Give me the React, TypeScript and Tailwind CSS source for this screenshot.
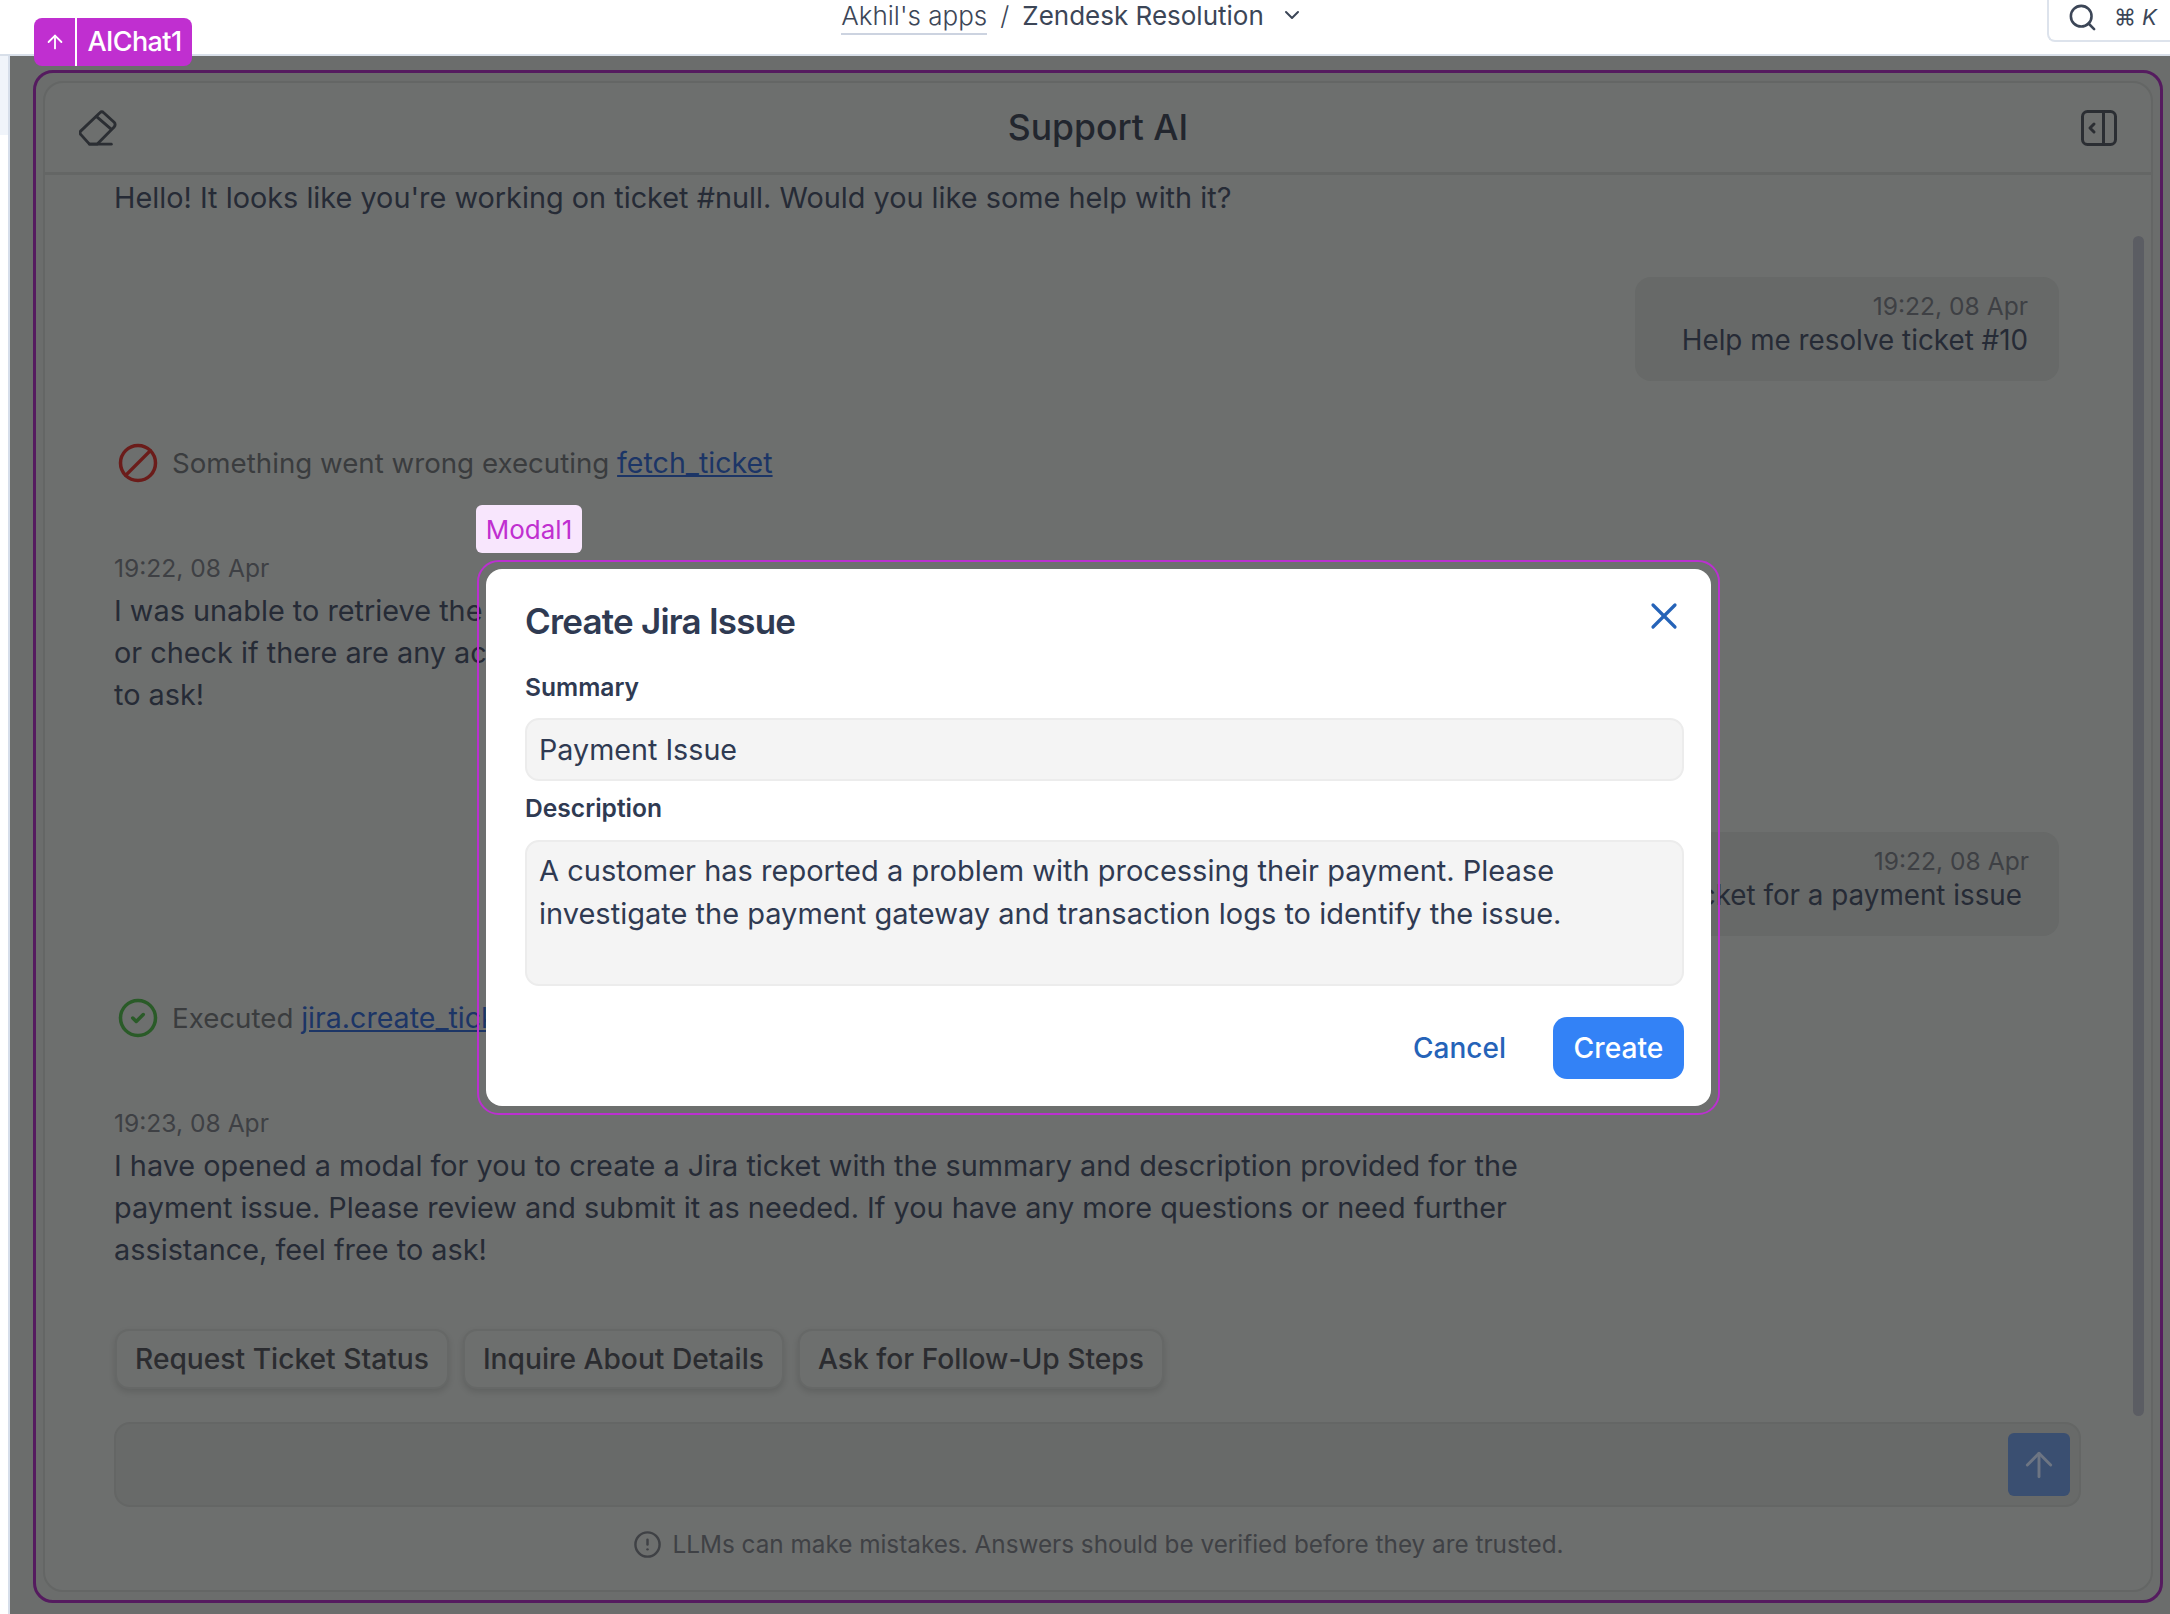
import React from 'react';
import { ArrowUp, ChevronDown, Search, X, Ban, CircleCheck, CircleAlert } from 'lucide-react';

const EraserIcon = () => (
  <svg width="38" height="40" viewBox="0 0 40 40" fill="none" stroke="#2b2e33" strokeWidth="3" strokeLinejoin="round" strokeLinecap="round">
    <path d="M22 4 Q24 2 26 4 L37 14 Q39 16 37 19 L19 37 H11 L2 27 Q0 25 2 23 Z" />
    <path d="M18.5 8 L33.5 21" />
    <path d="M11 37 H34" />
  </svg>
);

const PanelIcon = () => (
  <svg width="36" height="38" viewBox="0 0 36 38" fill="none" stroke="#2b2e33" strokeWidth="3" strokeLinejoin="round" strokeLinecap="round">
    <rect x="1.5" y="2.5" width="33" height="33" rx="5" />
    <path d="M22.5 3 V35" />
    <path d="M13 15 L9 19 L13 23" />
  </svg>
);

const App: React.FC = () => {
  return (
    <div className="flex h-[1614px] w-[2170px] flex-col overflow-hidden bg-white font-['Inter',sans-serif]">
      {/* top bar */}
      <div className="relative flex h-[56px] shrink-0 items-start justify-center border-b-2 border-[#d8dfe9] pr-[25px] text-[26px] leading-[32px] text-[#3c4657]">
        <span className="border-b-2 border-[#ccd3e0] pb-px font-light">Akhil's apps</span>
        <span className="mx-[13px] font-light">/</span>
        <span>Zendesk Resolution</span>
        <ChevronDown size={24} strokeWidth={2} className="ml-[16px] mt-[3px]" />
        <div className="absolute right-[-10px] top-[-6px] flex h-[48px] w-[133px] items-center rounded-bl-[8px] border-b-2 border-l-2 border-[#dde3ec] pl-[18px] text-[#3c4657]">
          <Search size={31} strokeWidth={2} />
          <span className="ml-[16px] text-[22px]">⌘</span>
          <span className="ml-[6px] text-[22px] italic">K</span>
        </div>
      </div>

      <div className="relative flex min-h-0 flex-1">
        {/* sidebar edge */}
        <div className="w-[10px] shrink-0 border-r-2 border-[#d6deea] bg-white">
          <div className="h-[79px] bg-[#f0f4fa]" />
        </div>

        <div className="flex-1 bg-[#6b6d6c] pb-[11px] pl-[23px] pr-[7px] pt-[14px]">
          {/* selected widget outline */}
          <div className="h-full rounded-[20px] border-[3px] border-[#551b5f] px-[7px] py-[8px]">
            <div className="relative flex h-full flex-col rounded-[20px] border-2 border-[#646665] bg-[#6d6f6e]">
              <div className="flex h-[92px] shrink-0 items-center justify-between border-b-[3px] border-[#646665] pl-[34px] pr-[34px]">
                <EraserIcon />
                <span className="mr-[2px] text-[35.5px] font-medium text-[#22262e]">Support AI</span>
                <PanelIcon />
              </div>

              <div className="absolute right-[7px] top-[153px] h-[1180px] w-[11px] rounded-full bg-[#5b5d63]" />

              <div className="flex min-h-0 flex-1 flex-col pl-[69px] pr-[70px] pt-[2px] text-[28.85px] leading-[42px] text-[#262b36]">
                <p>Hello! It looks like you're working on ticket #null. Would you like some help with it?</p>

                <div className="mr-[22px] mt-[58px] flex h-[104px] w-[424px] flex-col self-end rounded-[16px] bg-[#676968] pr-[31px] pt-[16px] text-right">
                  <span className="text-[24.6px] leading-[26px] text-[#3e4044]">19:22, 08 Apr</span>
                  <span className="whitespace-nowrap text-[27.8px]">Help me resolve ticket #10</span>
                </div>

                <div className="mt-[61px] flex items-center pl-[3px] text-[27.7px] text-[#3a3c3e]">
                  <Ban size={42} strokeWidth={2} className="mr-[13px] -scale-x-100 text-[#6b1c1a]" />
                  <span>Something went wrong executing <span className="text-[28.6px] text-[#1c3566] underline">fetch_ticket</span></span>
                </div>

                <div className="mt-[66px] text-[24.6px] leading-[36px] text-[#3e4044]">19:22, 08 Apr</div>
                <p className="mt-[4px] whitespace-nowrap">
                  I was unable to retrieve the details for ticket #10. Please verify the ticket number
                  <br />
                  or check if there are any access issues. If you need anything else, feel free
                  <br />
                  to ask!
                </p>

                <div className="mr-[22px] mt-[116px] flex h-[104px] w-[701px] flex-col self-end rounded-[16px] bg-[#676968] pr-[30px] pt-[16px] text-right">
                  <span className="text-[24.6px] leading-[26px] text-[#3e4044]">19:22, 08 Apr</span>
                  <span className="pr-[7px] text-[27.8px]">Create a Jira ticket for a payment issue</span>
                </div>

                <div className="mt-[61px] flex items-center pl-[3px] text-[27.7px] text-[#3a3c3e]">
                  <CircleCheck size={42} strokeWidth={2} className="mr-[13px] text-[#2a5b28]" />
                  <span>Executed <span className="text-[28.6px] text-[#1c3566] underline">jira.create_ticket</span></span>
                </div>

                <div className="mt-[66px] text-[24.6px] leading-[36px] text-[#3e4044]">19:23, 08 Apr</div>
                <p className="mt-[4px] whitespace-nowrap">
                  I have opened a modal for you to create a Jira ticket with the summary and description provided for the
                  <br />
                  payment issue. Please review and submit it as needed. If you have any more questions or need further
                  <br />
                  assistance, feel free to ask!
                </p>

                <div className="mt-[58px] flex gap-[14px] pl-px">
                  {['Request Ticket Status', 'Inquire About Details', 'Ask for Follow-Up Steps'].map((chip) => (
                    <span
                      key={chip}
                      className="flex h-[60px] items-center rounded-[14px] border-2 border-[#666867] bg-[#6d6f6e] px-[18px] text-[28.2px] font-medium text-[#2b2c30] shadow-[0_3px_6px_rgba(0,0,0,0.12)]"
                    >
                      {chip}
                    </span>
                  ))}
                </div>

                <div className="mt-[33px] flex h-[85px] shrink-0 items-center justify-end rounded-[16px] border-2 border-[#646665] bg-[#686a69] pr-[9px]">
                  <div className="flex h-[63px] w-[62px] items-center justify-center rounded-[6px] bg-[#3a4f71]">
                    <ArrowUp size={40} strokeWidth={1.75} className="text-[#6d7583]" />
                  </div>
                </div>

                <div className="mt-[19px] flex items-center justify-center pl-[2px] text-[24.3px] leading-[36px] text-[#3f4145]">
                  <CircleAlert size={29} strokeWidth={2} className="mr-[10px]" />
                  <span>LLMs can make mistakes. Answers should be verified before they are trusted.</span>
                </div>
              </div>
            </div>
          </div>
        </div>

        {/* modal */}
        <div className="absolute left-[477px] top-[504px] h-[555px] w-[1243px] rounded-[22px] border-2 border-[#bb30d0] p-[7px]">
          <div className="absolute left-[-3px] top-[-57px] flex h-[48px] w-[106px] items-center justify-center rounded-[6px] bg-[#f8e6fd] text-[26px] text-[#c02fd0]">
            Modal1
          </div>
          <div className="relative flex h-full flex-col rounded-[16px] bg-white pl-[39px] pr-[27px] text-[#2f3a52]">
            <h2 className="mt-[30px] text-[35px] font-semibold leading-[44px] tracking-[-0.8px]">Create Jira Issue</h2>
            <X size={44} strokeWidth={1.75} className="absolute right-[25px] top-[25px] text-[#2563b8]" />
            <label className="mt-[28px] text-[24.6px] font-semibold leading-[32px]">Summary</label>
            <div className="mt-[15px] flex h-[63px] items-center rounded-[14px] border-2 border-[#ececec] bg-[#f4f4f4] px-[12px] text-[28.7px]">
              Payment Issue
            </div>
            <label className="mt-[11px] text-[24.6px] font-semibold leading-[32px]">Description</label>
            <div className="mt-[16px] h-[146px] rounded-[14px] border-2 border-[#ececec] bg-[#f4f4f4] px-[12px] pt-[7px] text-[29px] leading-[43px]">
              A customer has reported a problem with processing their payment. Please
              <br />
              investigate the payment gateway and transaction logs to identify the issue.
            </div>
            <div className="mt-[31px] flex items-center justify-end">
              <span className="mr-[47px] text-[28px] font-medium text-[#2563b8]">Cancel</span>
              <span className="flex h-[62px] w-[131px] items-center justify-center rounded-[14px] bg-[#3382f6] text-[28.2px] font-medium text-white">
                Create
              </span>
            </div>
          </div>
        </div>

        {/* component tag */}
        <div className="absolute left-[34px] top-[-38px] flex h-[48px] w-[158px] items-stretch overflow-hidden rounded-[8px] bg-[#c02fd0] text-[27px] font-medium tracking-[-0.6px] text-white">
          <div className="flex w-[43px] items-center justify-center border-r-2 border-white">
            <ArrowUp size={22} strokeWidth={2} />
          </div>
          <div className="flex flex-1 items-center justify-center">AIChat1</div>
        </div>
      </div>
    </div>
  );
};

export default App;
